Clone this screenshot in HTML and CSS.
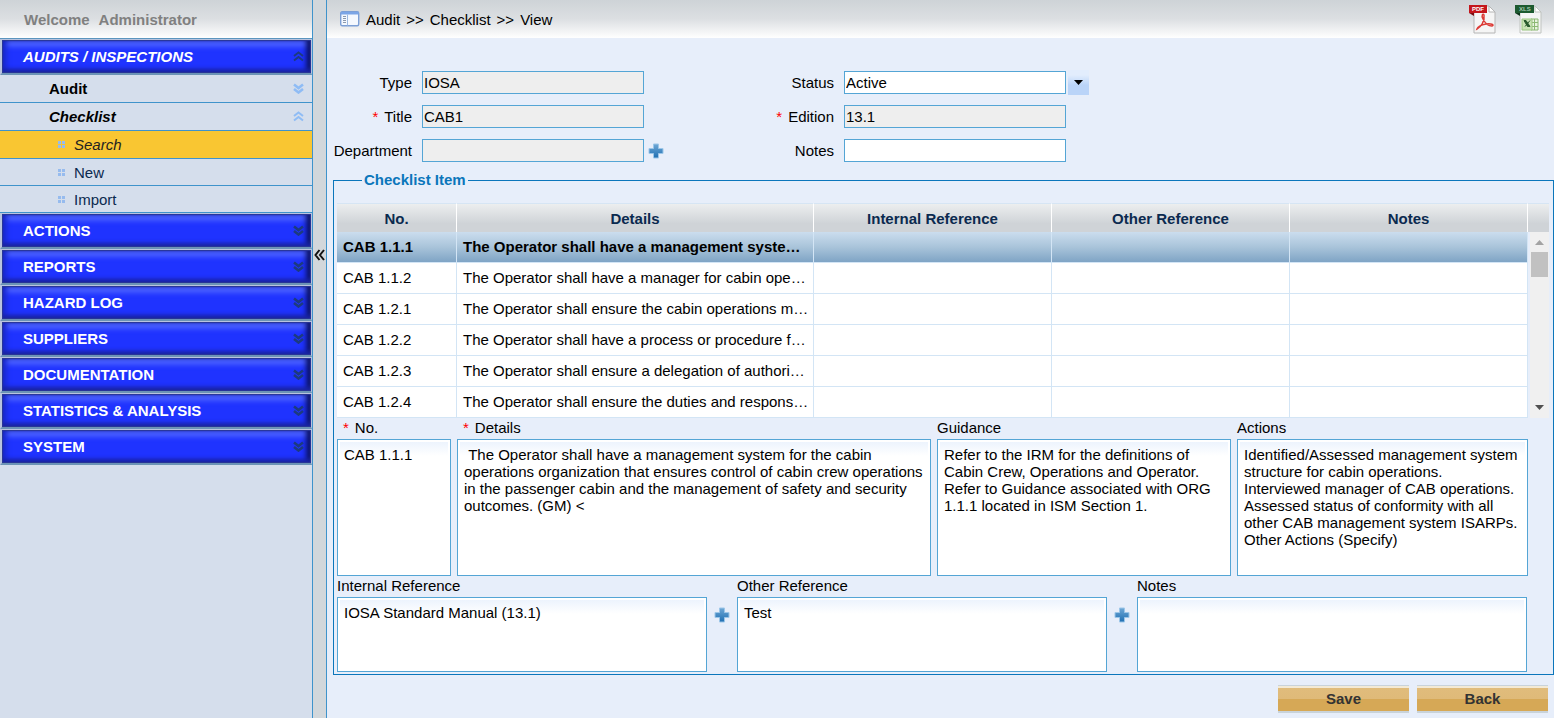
FILE: index.html
```html
<!DOCTYPE html>
<html lang="en">
<head>
<meta charset="utf-8">
<title>Audit - Checklist - View</title>
<link rel="stylesheet" href="styles.css">
</head>
<body>
<svg class="defs" aria-hidden="true">
  <defs>
    <linearGradient id="plus-fill" x1="0" y1="0" x2="0" y2="1">
      <stop offset="0" stop-color="#6fa8d6"/>
      <stop offset="1" stop-color="#1f6fb2"/>
    </linearGradient>
    <symbol id="chev-down" viewBox="0 0 11 11">
      <path d="M1 1.500 5.500 5 10 1.500M1 6 5.500 9.500 10 6" fill="none" stroke="currentColor" stroke-width="2.600"/>
    </symbol>
    <symbol id="chev-up" viewBox="0 0 11 11">
      <path d="M1 5 5.500 1.500 10 5M1 9.500 5.500 6 10 9.500" fill="none" stroke="currentColor" stroke-width="2"/>
    </symbol>
    <symbol id="dots" viewBox="0 0 7 7">
      <path d="M0 0h3v3H0zM4 0h3v3H4zM0 4h3v3H0zM4 4h3v3H4z" fill="currentColor"/>
    </symbol>
    <symbol id="plus" viewBox="0 0 16 16">
      <path d="M5.500 1h5v4.500H15v5h-4.500V15h-5v-4.500H1v-5h4.500z" fill="url(#plus-fill)" stroke="#9cc6e8" stroke-width="1"/>
    </symbol>
  </defs>
</svg>

<div class="app">
  <nav class="sidebar">
    <div class="welcome"><span>Welcome</span><span>Administrator</span></div>
    <button class="section open" type="button">AUDITS / INSPECTIONS<svg class="chev"><use href="#chev-up"/></svg></button>
    <a class="item group" href="#">Audit<svg class="chev"><use href="#chev-down"/></svg></a>
    <a class="item group current" href="#">Checklist<svg class="chev"><use href="#chev-up"/></svg></a>
    <a class="item leaf selected" href="#"><svg class="dots"><use href="#dots"/></svg>Search</a>
    <a class="item leaf" href="#"><svg class="dots"><use href="#dots"/></svg>New</a>
    <a class="item leaf" href="#"><svg class="dots"><use href="#dots"/></svg>Import</a>
    <button class="section" type="button">ACTIONS<svg class="chev"><use href="#chev-down"/></svg></button>
    <button class="section" type="button">REPORTS<svg class="chev"><use href="#chev-down"/></svg></button>
    <button class="section" type="button">HAZARD LOG<svg class="chev"><use href="#chev-down"/></svg></button>
    <button class="section" type="button">SUPPLIERS<svg class="chev"><use href="#chev-down"/></svg></button>
    <button class="section" type="button">DOCUMENTATION<svg class="chev"><use href="#chev-down"/></svg></button>
    <button class="section" type="button">STATISTICS &amp; ANALYSIS<svg class="chev"><use href="#chev-down"/></svg></button>
    <button class="section" type="button">SYSTEM<svg class="chev"><use href="#chev-down"/></svg></button>
  </nav>

  <button class="splitter" type="button" aria-label="Collapse menu">
    <svg width="11" height="12" viewBox="0 0 11 12"><path d="M5.500 1 1.500 6l4 5M10 1 6 6l4 5" fill="none" stroke="#111" stroke-width="2"/></svg>
  </button>

  <main class="main">
    <header class="topbar">
      <svg width="20" height="16" viewBox="0 0 20 16">
        <rect x=".7" y=".7" width="18" height="14" rx="1.500" fill="#f4f8fe" stroke="#7c9fd6" stroke-width="1.400"/>
        <path d="M1 1h17.500v2.500H1z" fill="#7ba5e6"/>
        <path d="M7.500 3.500v11" stroke="#9db9e2"/>
        <path d="M3 5.500h3M3 7.500h3M3 9.500h3M3 11.500h3" stroke="#8b98ad"/>
      </svg>
      <span>Audit</span><span>&gt;&gt;</span><span>Checklist</span><span>&gt;&gt;</span><span>View</span>
      <div class="exports">
        <button type="button" aria-label="Export PDF">
          <svg width="29" height="30" viewBox="0 0 29 30">
            <path d="M6 2h15l6 6v21H6z" fill="#f5f5f5" stroke="#b5b5b5"/>
            <path d="M21 2v6h6z" fill="#fff" stroke="#b5b5b5"/>
            <path d="M1 1h18v8H1z" fill="#c4161c"/>
            <path d="M1 9l5 3V9z" fill="#7c0c10"/>
            <path d="M9 25c4-2 8-8 7-14-1-2-3 0-1 4s5 7 9 7c3-1-1-3-6-2s-8 2-9 5z" fill="none" stroke="#dc3a35" stroke-width="1.500"/>
            <text x="4" y="7" class="badge-text">PDF</text>
          </svg>
        </button>
        <button type="button" aria-label="Export XLS">
          <svg width="29" height="30" viewBox="0 0 29 30">
            <path d="M6 2h15l6 6v21H6z" fill="#f5f5f5" stroke="#c0c4c0"/>
            <path d="M21 2v6h6z" fill="#fff" stroke="#c0c4c0"/>
            <path d="M1 1h19v8H1z" fill="#1d5a30"/>
            <path d="M1 9l5 3V9z" fill="#0d351b"/>
            <path d="M17 15h7v11h-7z" fill="#e8f3df" stroke="#8bb873"/>
            <path d="M17 18.500h7M17 22.500h7M20.500 15v11" stroke="#8bb873"/>
            <path d="M8 15h10v11H8z" fill="#c9e3b5" stroke="#9ac680"/>
            <path d="M10 16.500h2l4 6h-2.500zM16 16.500l-5 6" fill="#285a2c" stroke="#285a2c"/>
            <text x="5" y="7" class="badge-text xls">XLS</text>
          </svg>
        </button>
      </div>
    </header>

    <form class="content">
      <div class="fields">
        <div class="field"><label for="type">Type</label><input id="type" value="IOSA" readonly></div>
        <div class="field"><label for="status">Status</label>
          <select id="status"><option>Active</option></select>
          <button class="drop" type="button" aria-label="Open status list"><svg width="11" height="7" viewBox="0 0 11 7"><path d="M1 1h9L5.500 6z"/></svg></button></div>
        <div class="field"><label for="title"><i>*</i>Title</label><input id="title" value="CAB1" readonly></div>
        <div class="field"><label for="edition"><i>*</i>Edition</label><input id="edition" value="13.1" readonly></div>
        <div class="field"><label for="dept">Department</label><input id="dept" readonly>
          <button class="add" type="button" aria-label="Add department"><svg width="16" height="16"><use href="#plus"/></svg></button></div>
        <div class="field"><label for="notes">Notes</label><input id="notes"></div>
      </div>

      <fieldset class="checklist">
        <legend>Checklist Item</legend>
        <div class="list">
          <table>
            <colgroup><col class="c-no"><col class="c-details"><col class="c-ref"><col class="c-ref"><col class="c-ref"></colgroup>
            <thead><tr><th>No.</th><th>Details</th><th>Internal Reference</th><th>Other Reference</th><th>Notes</th></tr></thead>
            <tbody>
              <tr class="active"><td>CAB 1.1.1</td><td>The Operator shall have a management syste…</td><td></td><td></td><td></td></tr>
              <tr><td>CAB 1.1.2</td><td>The Operator shall have a manager for cabin ope…</td><td></td><td></td><td></td></tr>
              <tr><td>CAB 1.2.1</td><td>The Operator shall ensure the cabin operations m…</td><td></td><td></td><td></td></tr>
              <tr><td>CAB 1.2.2</td><td>The Operator shall have a process or procedure f…</td><td></td><td></td><td></td></tr>
              <tr><td>CAB 1.2.3</td><td>The Operator shall ensure a delegation of authori…</td><td></td><td></td><td></td></tr>
              <tr><td>CAB 1.2.4</td><td>The Operator shall ensure the duties and respons…</td><td></td><td></td><td></td></tr>
            </tbody>
          </table>
          <div class="rail">
            <div class="rail-head"></div>
            <div class="scroll">
              <svg width="9" height="5" viewBox="0 0 9 5"><path d="M4.500 0 9 5H0z" fill="#a3a3a3"/></svg>
              <div class="thumb"></div>
              <svg width="9" height="5" viewBox="0 0 9 5"><path d="M0 0h9L4.500 5z" fill="#505050"/></svg>
            </div>
          </div>
        </div>

        <div class="detail-row">
          <div class="cell"><label for="d-no"><i>*</i>No.</label><textarea id="d-no">CAB 1.1.1</textarea></div>
          <div class="cell"><label for="d-details"><i>*</i>Details</label><textarea id="d-details"> The Operator shall have a management system for the cabin operations organization that ensures control of cabin crew operations in the passenger cabin and the management of safety and security outcomes. (GM) &lt;</textarea></div>
          <div class="cell"><label for="d-guid">Guidance</label><textarea id="d-guid">Refer to the IRM for the definitions of Cabin Crew, Operations and Operator.
Refer to Guidance associated with ORG 1.1.1 located in ISM Section 1.</textarea></div>
          <div class="cell"><label for="d-act">Actions</label><textarea id="d-act">Identified/Assessed management system structure for cabin operations.
Interviewed manager of CAB operations.
Assessed status of conformity with all other CAB management system ISARPs.
Other Actions (Specify)</textarea></div>
        </div>

        <div class="ref-row">
          <div class="cell"><label for="r-int">Internal Reference</label><textarea id="r-int">IOSA Standard Manual (13.1)</textarea></div>
          <button class="add" type="button" aria-label="Add internal reference"><svg width="16" height="16"><use href="#plus"/></svg></button>
          <div class="cell"><label for="r-oth">Other Reference</label><textarea id="r-oth">Test</textarea></div>
          <button class="add" type="button" aria-label="Add other reference"><svg width="16" height="16"><use href="#plus"/></svg></button>
          <div class="cell"><label for="r-notes">Notes</label><textarea id="r-notes"></textarea></div>
        </div>
      </fieldset>

      <div class="actions">
        <button type="button">Save</button>
        <button type="button">Back</button>
      </div>
    </form>
  </main>
</div>
</body>
</html>
```
FILE: styles.css
```css
* { box-sizing: border-box; }

body {
  margin: 0;
  background: #e7eefa;
  color: #000;
}

body, button, input, select, textarea {
  font-family: "Liberation Sans", Arial, sans-serif;
  font-size: 15px;
}

button {
  margin: 0;
  padding: 0;
  border: 0;
  background: none;
}

svg { display: block; flex: none; }
.defs { position: absolute; width: 0; height: 0; }

.app { display: flex; min-height: 100vh; }

/* Sidebar */
.sidebar {
  display: flex;
  flex-direction: column;
  flex: none;
  width: 313px;
  background: #d5deec;
  border-right: 1px solid #3f93cb;
}

.welcome {
  display: flex;
  gap: 9px;
  height: 39px;
  padding: 0 24px;
  border-bottom: 1px solid #5c96bf;
  background: linear-gradient(#ced3d7, #dcdfe2 50%, #fff);
  color: #808080;
  font-weight: bold;
  line-height: 40px;
}

.section {
  display: flex;
  align-items: center;
  justify-content: space-between;
  height: 36px;
  padding: 0 7px 0 21px;
  border: solid #b9c3de;
  border-width: 1px 1px 2px 2px;
  border-bottom-color: #6c94b6;
  background: #1f33ff;
  box-shadow:
    inset 0 0 1px 1px #2a3796,
    inset 0 -5px 4px -1px #1a24a4,
    inset -6px 0 5px -1px #0c1468,
    inset 6px 0 5px -1px #1b2ad0,
    inset 0 10px 5px -3px #4a60ff;
  color: #fff;
  font-weight: bold;
}
.section.open { font-style: italic; }
.section .chev { color: #1c3a80; }

.chev { width: 11px; height: 11px; }

.item {
  display: flex;
  align-items: center;
  height: 28px;
  border-bottom: 1px solid #3f93cb;
  color: #0b2a4f;
  text-decoration: none;
}
.group {
  justify-content: space-between;
  padding: 0 8px 0 49px;
  color: #000;
  font-weight: bold;
}
.group .chev { color: #8fbcf5; }
.group.current { font-style: italic; }
.leaf { gap: 9px; height: 27px; padding-left: 58px; }
.leaf.selected { height: 28px; background: #f9c632; font-style: italic; color: #222; }
.dots { width: 7px; height: 7px; color: #96bbee; }

.splitter {
  display: flex;
  justify-content: center;
  flex: none;
  width: 14px;
  padding-top: 249px;
  border-right: 1px solid #3f93cb;
  background: #d2d7db;
}

/* Main area */
.main { flex: 1; min-width: 0; }

.topbar {
  display: flex;
  align-items: center;
  gap: 6px;
  height: 38px;
  padding: 0 11px 0 13px;
  background: linear-gradient(#ced3d7, #dcdfe2 50%, #fff);
}
.exports { display: flex; gap: 17px; margin-left: auto; }
.badge-text { fill: #fff; font-size: 6px; font-weight: bold; }
.badge-text.xls { fill: #a5c9ae; }

.content { margin: 0; }

.fields {
  display: grid;
  grid-template-columns: 422px 422px;
  row-gap: 11px;
  padding-top: 33px;
}
.field { display: flex; align-items: center; height: 23px; }
.field label { width: 85px; margin-right: 10px; text-align: right; white-space: nowrap; }
.field input, .field select {
  width: 222px;
  height: 23px;
  padding: 0 1px;
  border: 1px solid #54a5d5;
  border-radius: 0;
  background: #fff;
  color: #000;
  appearance: none;
}
.field input:read-only { background: #eee; }
.field .add { margin-left: 4px; }
label i { margin-right: 6px; color: #f00; font-style: normal; }

.drop {
  display: flex;
  align-items: center;
  justify-content: center;
  width: 21px;
  height: 25px;
  margin-left: 2px;
  background: linear-gradient(#e2edfd 20%, #bad4f8 60%);
}

.checklist {
  min-width: 0;
  margin: 9px 0 0 6px;
  padding: 14px 4px 2px 3px;
  border: 1px solid #0b76bb;
}
.checklist legend {
  margin-left: 25px;
  padding: 0 2px;
  color: #0b76bb;
  font-weight: bold;
  line-height: 18px;
}

/* Item list */
.list { display: flex; height: 215px; overflow: hidden; }
table {
  flex: 1;
  width: 0;
  height: 215px;
  border-collapse: separate;
  border-spacing: 0;
  table-layout: fixed;
  background: #fff;
}
.c-no { width: 120px; }
.c-details { width: 30%; }
.c-ref { width: 20%; }
th {
  height: 29px;
  padding: 0;
  border-top: 1px solid #d6e5f4;
  border-right: 1px solid #fff;
  background: linear-gradient(#eceeef, #cfd3d7 70%);
  color: #0b2a4f;
}
td {
  height: 31px;
  padding: 0 2px 1px 6px;
  border-right: 1px solid #d3e5f5;
  border-bottom: 1px solid #d3e5f5;
  white-space: nowrap;
}
.active td {
  background: linear-gradient(#cbddee, #a9c4da 50%, #7fa4c5);
  font-weight: bold;
}

.rail { display: flex; flex-direction: column; width: 21px; }
.rail-head {
  height: 29px;
  border-top: 1px solid #d6e5f4;
  background: linear-gradient(#eceeef, #cfd3d7 70%);
}
.scroll {
  display: flex;
  flex: 1;
  flex-direction: column;
  align-items: center;
  margin-left: 2px;
  padding: 8px 0;
  background: #f0f0f0;
}
.thumb { width: 17px; height: 25px; margin: 7px 0 auto; background: #c1c1c1; }

/* Item editors */
.detail-row {
  display: grid;
  grid-template-columns: 114fr 474fr 294fr 291fr;
  gap: 6px;
  margin-right: 21px;
}
.ref-row {
  display: grid;
  grid-template-columns: 370fr 16px 370fr 16px 390fr;
  gap: 7px;
  margin-right: 22px;
}
.cell { display: flex; flex-direction: column; min-width: 0; }
.cell label { line-height: 19px; height: 21px; }
.cell label i { margin-left: 6px; }
textarea {
  width: 100%;
  height: 137px;
  padding: 6px 2px 2px 6px;
  border: 1px solid #54a5d5;
  background: linear-gradient(#eaf2fd, #fff 16px);
  box-shadow: inset 0 0 0 2px #fff;
  color: #000;
  line-height: 17px;
  resize: none;
  overflow: hidden;
}
.ref-row textarea { height: 75px; }
.ref-row .add { align-self: start; margin-top: 31px; }

.actions {
  display: flex;
  justify-content: flex-end;
  gap: 8px;
  padding: 10px 6px 4px 0;
}
.actions button {
  width: 131px;
  height: 28px;
  border: solid #c9d3da;
  border-width: 1px 0 2px;
  background: linear-gradient(#f3ead6 2px, #e0bc7c 2px, #dfba79 13px, #d6a856 13px);
  color: #333;
  font-weight: bold;
}
```
